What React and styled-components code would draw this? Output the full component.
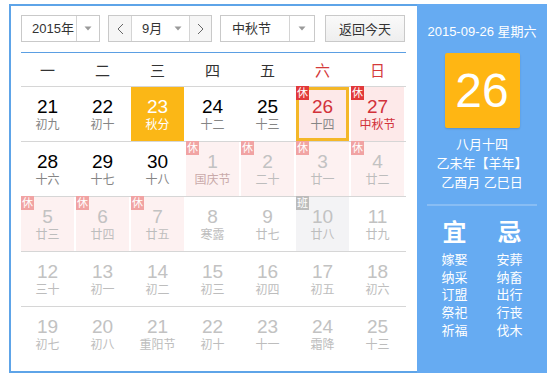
import React from "react";
import styled, { createGlobalStyle } from "styled-components";

const Global = createGlobalStyle`
  html, body { margin: 0; padding: 0; background: #fff; }
  body { font-family: "Liberation Sans", "Noto Sans CJK SC", sans-serif; }
  * { box-sizing: border-box; }
`;

const Widget = styled.div`
  display: flex;
  width: 538px;
  height: 369px;
  margin: 4px 0 0 9px;
`;

const Main = styled.div`
  width: 408px;
  border: 2px solid #5ea4e8;
  border-right: none;
  padding: 9px 11px 0 10px;
  display: flex;
  flex-direction: column;
`;

const Toolbar = styled.div`
  display: flex;
  height: 27px;
`;

const Select = styled.div`
  display: flex;
  width: ${(p) => p.$w}px;
  height: 27px;
  margin-right: ${(p) => p.$mr || 0}px;
  border: 1px solid #c9c9c9;
  background: #fff;
  font-size: 13px;
  color: #333;
`;

const SelectText = styled.div`
  flex: 1;
  display: flex;
  align-items: center;
  padding-left: ${(p) => p.$pl || 0}px;
  line-height: 25px;
`;

const ArrowBox = styled.div`
  width: ${(p) => p.$w || 23}px;
  border-left: ${(p) => (p.$plain ? "none" : "1px solid #d4d4d4")};
  display: flex;
  align-items: center;
  justify-content: center;
`;

const NavBtn = styled.div`
  width: ${(p) => p.$w}px;
  display: flex;
  align-items: center;
  justify-content: center;
  background: #f6f6f6;
  border-left: ${(p) => (p.$right ? "1px solid #d4d4d4" : "none")};
  border-right: ${(p) => (p.$right ? "none" : "1px solid #d4d4d4")};
`;

const Button = styled.div`
  width: 80px;
  height: 27px;
  border: 1px solid #c9c9c9;
  background: linear-gradient(#fafafa, #eeeeee);
  font-size: 13px;
  color: #333;
  display: flex;
  align-items: center;
  justify-content: center;
`;

const BlueLine = styled.div`
  height: 1px;
  margin-top: 10px;
  background: #5b9fe3;
`;

const Grid = styled.div`
  display: grid;
  grid-template-columns: repeat(7, 53px);
  column-gap: 2px;
  border-bottom: 1px solid ${(p) => (p.$last ? "transparent" : "#d6d6d6")};
`;

const Weekday = styled.div`
  height: 33px;
  display: flex;
  align-items: center;
  justify-content: center;
  font-size: 15px;
  color: ${(p) => (p.$weekend ? "#d43a3a" : "#333")};
`;

const cellBg = (p) => {
  if (p.$today) return "#fbb716";
  if (p.$rest) return p.$other ? "#fdf1f1" : "#fde9e9";
  if (p.$work) return "#f3f3f5";
  return "transparent";
};

const Cell = styled.div`
  position: relative;
  height: 54px;
  padding-top: 10px;
  display: flex;
  flex-direction: column;
  align-items: center;
  background: ${cellBg};
  box-shadow: ${(p) => (p.$selected ? "inset 0 0 0 3px #f4b728" : "none")};
`;

const numColor = (p) => {
  if (p.$today) return "#fff";
  if (p.$other) return "#c2c2c2";
  if (p.$red) return "#d2323a";
  return "#000";
};

const lunarColor = (p) => {
  if (p.$today) return "#fff";
  if (p.$other) return p.$fest ? "#c9aaaa" : "#bdbdbd";
  if (p.$fest) return "#d2323a";
  return "#858585";
};

const Num = styled.div`
  font-size: 19px;
  line-height: 20px;
  color: ${numColor};
`;

const Lunar = styled.div`
  font-size: 12px;
  line-height: 16px;
  color: ${lunarColor};
`;

const Badge = styled.div`
  position: absolute;
  top: -1px;
  left: 0;
  width: 13px;
  height: 14px;
  font-size: 11px;
  line-height: 14px;
  text-align: center;
  color: #fff;
  background: ${(p) => (p.$work ? "#bcbcbc" : p.$other ? "#f1a3a3" : "#e2393a")};
  z-index: 1;
`;

const Side = styled.div`
  width: 130px;
  height: 369px;
  background: #66abf2;
  color: #fff;
  display: flex;
  flex-direction: column;
  align-items: center;
  padding-top: 18px;
`;

const SideDate = styled.div`
  font-size: 13px;
  line-height: 20px;
`;

const BigDay = styled.div`
  width: 75px;
  height: 75px;
  margin-top: 11px;
  background: #ffb613;
  border-radius: 2px;
  box-shadow: 0 1px 2px rgba(0, 0, 0, 0.15);
  font-size: 48px;
  display: flex;
  align-items: center;
  justify-content: center;
`;

const SideLines = styled.div`
  margin-top: 7px;
  font-size: 13px;
  line-height: 19px;
  text-align: center;
`;

const SideSep = styled.div`
  align-self: stretch;
  margin: 12px 10px 0;
  height: 2px;
  background: #88bdf4;
`;

const YiJi = styled.div`
  display: flex;
  margin-top: 12px;
`;

const YiJiCol = styled.div`
  width: 55px;
  display: flex;
  flex-direction: column;
  align-items: center;
`;

const YiJiTitle = styled.div`
  font-size: 24px;
  line-height: 30px;
  font-weight: bold;
  margin-bottom: 3px;
`;

const YiJiItem = styled.div`
  font-size: 13px;
  line-height: 17.7px;
`;

const Tri = () => (
  <svg width="8" height="5" viewBox="0 0 8 5">
    <path d="M0.5 0.5 L7.5 0.5 L4 4.5 Z" fill="#9a9a9a" />
  </svg>
);

const Chevron = ({ dir }) => (
  <svg width="7" height="12" viewBox="0 0 7 12">
    <path
      d={dir === "left" ? "M6 1 L1 6 L6 11" : "M1 1 L6 6 L1 11"}
      fill="none"
      stroke="#666"
      strokeWidth="1"
    />
  </svg>
);

const weekdays = ["一", "二", "三", "四", "五", "六", "日"];

const rows = [
  [
    { n: 21, l: "初九" },
    { n: 22, l: "初十" },
    { n: 23, l: "秋分", today: true },
    { n: 24, l: "十二" },
    { n: 25, l: "十三" },
    { n: 26, l: "十四", rest: true, selected: true, red: true },
    { n: 27, l: "中秋节", rest: true, red: true, fest: true },
  ],
  [
    { n: 28, l: "十六" },
    { n: 29, l: "十七" },
    { n: 30, l: "十八" },
    { n: 1, l: "国庆节", other: true, rest: true, fest: true },
    { n: 2, l: "二十", other: true, rest: true },
    { n: 3, l: "廿一", other: true, rest: true },
    { n: 4, l: "廿二", other: true, rest: true },
  ],
  [
    { n: 5, l: "廿三", other: true, rest: true },
    { n: 6, l: "廿四", other: true, rest: true },
    { n: 7, l: "廿五", other: true, rest: true },
    { n: 8, l: "寒露", other: true },
    { n: 9, l: "廿七", other: true },
    { n: 10, l: "廿八", other: true, work: true },
    { n: 11, l: "廿九", other: true },
  ],
  [
    { n: 12, l: "三十", other: true },
    { n: 13, l: "初一", other: true },
    { n: 14, l: "初二", other: true },
    { n: 15, l: "初三", other: true },
    { n: 16, l: "初四", other: true },
    { n: 17, l: "初五", other: true },
    { n: 18, l: "初六", other: true },
  ],
  [
    { n: 19, l: "初七", other: true },
    { n: 20, l: "初八", other: true },
    { n: 21, l: "重阳节", other: true },
    { n: 22, l: "初十", other: true },
    { n: 23, l: "十一", other: true },
    { n: 24, l: "霜降", other: true },
    { n: 25, l: "十三", other: true },
  ],
];

const yi = ["嫁娶", "纳采", "订盟", "祭祀", "祈福"];
const ji = ["安葬", "纳畜", "出行", "行丧", "伐木"];

export default function App() {
  return (
    <>
      <Global />
      <Widget>
        <Main>
          <Toolbar>
            <Select $w={79} $mr={8}>
              <SelectText $pl={10}>2015年</SelectText>
              <ArrowBox $w={23}>
                <Tri />
              </ArrowBox>
            </Select>
            <Select $w={104} $mr={8}>
              <NavBtn $w={23}>
                <Chevron dir="left" />
              </NavBtn>
              <SelectText $pl={10}>9月</SelectText>
              <ArrowBox $w={22} $plain>
                <Tri />
              </ArrowBox>
              <NavBtn $w={22} $right>
                <Chevron dir="right" />
              </NavBtn>
            </Select>
            <Select $w={95} $mr={10}>
              <SelectText $pl={11}>中秋节</SelectText>
              <ArrowBox $w={25}>
                <Tri />
              </ArrowBox>
            </Select>
            <Button>返回今天</Button>
          </Toolbar>
          <BlueLine />
          <Grid>
            {weekdays.map((w, i) => (
              <Weekday key={w} $weekend={i >= 5}>
                {w}
              </Weekday>
            ))}
          </Grid>
          {rows.map((row, ri) => (
            <Grid key={ri} $last={ri === rows.length - 1}>
              {row.map((d, ci) => (
                <Cell
                  key={ci}
                  $today={d.today}
                  $rest={d.rest}
                  $work={d.work}
                  $other={d.other}
                  $selected={d.selected}
                >
                  {d.rest && <Badge $other={d.other}>休</Badge>}
                  {d.work && <Badge $work>班</Badge>}
                  <Num $today={d.today} $other={d.other} $red={d.red}>
                    {d.n}
                  </Num>
                  <Lunar $today={d.today} $other={d.other} $fest={d.fest}>
                    {d.l}
                  </Lunar>
                </Cell>
              ))}
            </Grid>
          ))}
        </Main>
        <Side>
          <SideDate>2015-09-26 星期六</SideDate>
          <BigDay>26</BigDay>
          <SideLines>
            <div>八月十四</div>
            <div>乙未年【羊年】</div>
            <div>乙酉月 乙巳日</div>
          </SideLines>
          <SideSep />
          <YiJi>
            <YiJiCol>
              <YiJiTitle>宜</YiJiTitle>
              {yi.map((t) => (
                <YiJiItem key={t}>{t}</YiJiItem>
              ))}
            </YiJiCol>
            <YiJiCol>
              <YiJiTitle>忌</YiJiTitle>
              {ji.map((t) => (
                <YiJiItem key={t}>{t}</YiJiItem>
              ))}
            </YiJiCol>
          </YiJi>
        </Side>
      </Widget>
    </>
  );
}
